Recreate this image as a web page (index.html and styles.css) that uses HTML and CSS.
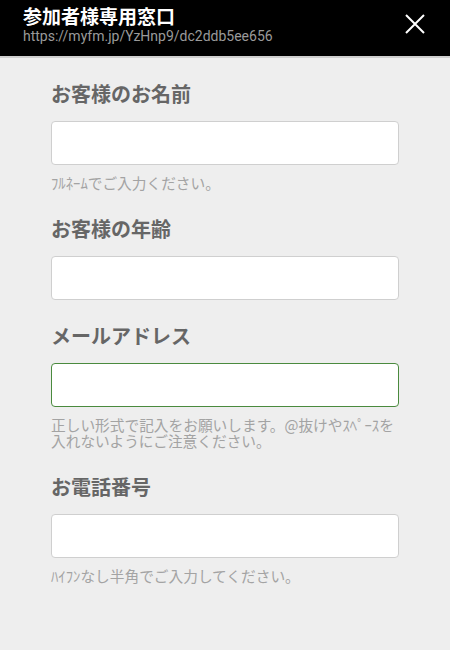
FILE: index.html
```html
<!DOCTYPE html>
<html>
<head>
    <title>参加者様専用窓口</title>
    <link rel="stylesheet" href="styles.css">
</head>
<body>
    <div class="header">
        <div class="header-text">
            <div class="title">参加者様専用窓口</div>
            <div class="url">https://myfm.jp/YzHnp9/dc2ddb5ee656</div>
        </div>
        <svg class="close" width="22" height="22" viewBox="0 0 22 22">
            <path d="M2 2 L20 20 M20 2 L2 20" stroke="#fff" stroke-width="2" fill="none"/>
        </svg>
    </div>

    <div class="form">
        <div class="field">
            <label class="label">お客様のお名前</label>
            <input type="text" class="input">
            <p class="hint">ﾌﾙﾈｰﾑでご入力ください。</p>
        </div>
        <div class="field">
            <label class="label">お客様の年齢</label>
            <input type="text" class="input">
        </div>
        <div class="field">
            <label class="label">メールアドレス</label>
            <input type="text" class="input focused">
            <p class="hint">正しい形式で記入をお願いします。@抜けやｽﾍﾟｰｽを入れないようにご注意ください。</p>
        </div>
        <div class="field">
            <label class="label">お電話番号</label>
            <input type="text" class="input">
            <p class="hint">ﾊｲﾌﾝなし半角でご入力してください。</p>
        </div>
    </div>
</body>
</html>
```

FILE: styles.css
```css
body {
    margin: 0;
    background: #eeeeee;
    font-family: Roboto, "Noto Sans CJK JP", sans-serif;
}
.header {
    background: #000;
    height: 56px;
    border-bottom: 2px solid #cfcfcf;
    display: flex;
    justify-content: space-between;
    align-items: flex-start;
    padding: 0 24px 0 23px;
}
.title {
    color: #fff;
    font-family: "Noto Sans CJK JP", sans-serif;
    font-weight: bold;
    font-size: 19px;
    line-height: 22px;
    margin-top: 5px;
}
.url {
    color: #9a9a9a;
    font-size: 14px;
    line-height: 16px;
    margin-top: 1px;
}
.close {
    margin-top: 13px;
}
.form {
    padding: 22px 51px 0 51px;
}
.field {
    margin-bottom: 22px;
}
.label {
    display: block;
    font-family: "Noto Sans CJK JP", sans-serif;
    font-weight: bold;
    font-size: 20px;
    line-height: 28px;
    color: #666;
    margin-bottom: 13px;
}
.input {
    display: block;
    box-sizing: border-box;
    width: 100%;
    height: 44px;
    background: #fff;
    border: 1px solid #cfcfcf;
    border-radius: 4px;
    margin: 0;
    outline: none;
}
.input.focused {
    border-color: #4a8a3e;
}
.hint {
    font-family: "Noto Sans CJK JP", sans-serif;
    font-size: 14.7px;
    line-height: 16px;
    color: #a3a3a3;
    margin: 10px -4px 0 0;
    padding-bottom: 2px;
}
```
